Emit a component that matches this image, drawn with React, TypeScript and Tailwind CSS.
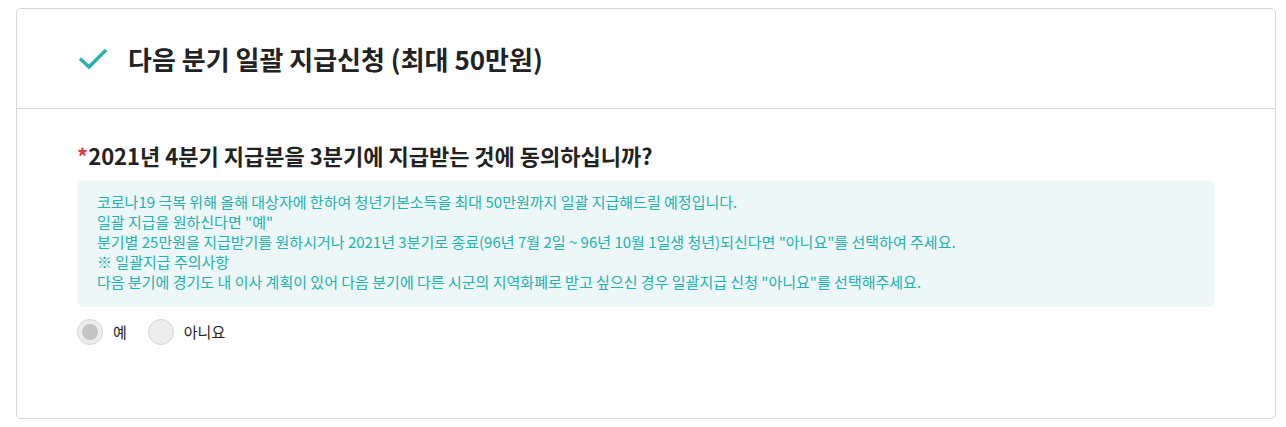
import React from "react";

const font = { fontFamily: '"Noto Sans CJK KR", "Noto Sans", sans-serif' };

const lines = [
  "코로나19 극복 위해 올해 대상자에 한하여 청년기본소득을 최대 50만원까지 일괄 지급해드릴 예정입니다.",
  '일괄 지급을 원하신다면 "예"',
  '분기별 25만원을 지급받기를 원하시거나 2021년 3분기로 종료(96년 7월 2일 ~ 96년 10월 1일생 청년)되신다면 "아니요"를 선택하여 주세요.',
  "※ 일괄지급 주의사항",
  '다음 분기에 경기도 내 이사 계획이 있어 다음 분기에 다른 시군의 지역화폐로 받고 싶으신 경우 일괄지급 신청 "아니요"를 선택해주세요.',
];

function Radio({ label, checked }: { label: string; checked?: boolean }) {
  return (
    <label className="flex items-center gap-[10px] cursor-pointer">
      <span className="flex h-[26px] w-[26px] items-center justify-center rounded-full border border-[#d4d4d4] bg-[#ededed]">
        {checked && <span className="h-[16px] w-[16px] rounded-full bg-[#c4c4c4]" />}
      </span>
      <span className="text-[15px] text-[#222]">{label}</span>
    </label>
  );
}

export default function App() {
  return (
    <div className="bg-white pt-[8px] pl-[16px] pr-[10px] pb-[8px]" style={font}>
      <div className="rounded-[5px] border border-[#d6d6d6] bg-white h-[411px]">
        <div className="flex h-[100px] items-center gap-[20px] border-b border-[#d9d9d9] pl-[61px]">
          <svg width="30" height="22" viewBox="0 0 30 22" fill="none">
            <path d="M2 10.5 L11 19 L28 2" stroke="#26b3ad" strokeWidth="3.5" />
          </svg>
          <h1 className="text-[26px] font-bold text-[#222]">
            다음 분기 일괄 지급신청 (최대 50만원)
          </h1>
        </div>
        <div className="pl-[60px] pr-[60px] pt-[31px]">
          <h2 className="text-[22px] font-bold leading-[30px] text-[#222]">
            <span className="text-[#e8323c]">*</span>2021년 4분기 지급분을 3분기에 지급받는 것에 동의하십니까?
          </h2>
          <div className="mt-[10px] rounded-[7px] bg-[#edf7f8] pl-[20px] pr-[20px] pt-[12px] pb-[15px]">
            {lines.map((l) => (
              <p key={l} className="text-[15px] leading-[20px] text-[#23b2ad]">
                {l}
              </p>
            ))}
          </div>
          <div className="mt-[12px] flex items-center gap-[21px]">
            <Radio label="예" checked />
            <Radio label="아니요" />
          </div>
        </div>
      </div>
    </div>
  );
}
